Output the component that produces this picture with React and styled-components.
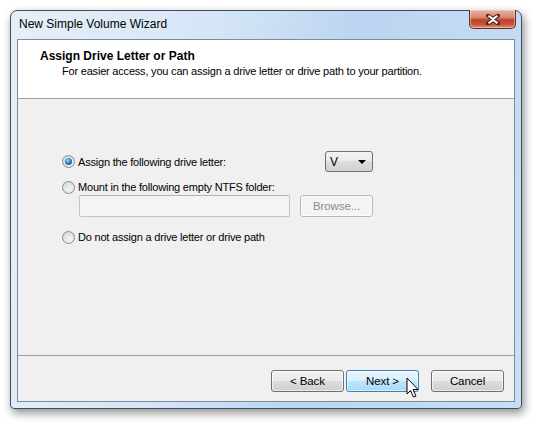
import React from "react";
import styled, { createGlobalStyle } from "styled-components";

const GlobalStyle = createGlobalStyle`
  html, body {
    margin: 0;
    padding: 0;
    background: #ffffff;
  }
  body {
    font-family: "Liberation Sans", Arial, sans-serif;
    font-size: 11px;
    color: #000;
  }
`;

const Page = styled.div`
  padding: 10px;
  width: 541px;
  height: 427px;
  box-sizing: border-box;
`;

const Window = styled.div`
  position: relative;
  width: 512px;
  height: 399px;
  box-sizing: border-box;
  border: 1px solid #3f4d5d;
  border-radius: 7px 7px 4px 4px;
  background: linear-gradient(100deg, #e6eff9 0%, #d6e6f7 35%, #bcd5f0 60%, #c8def5 100%);
  box-shadow: 2px 4px 10px rgba(0, 0, 0, 0.45);
  display: flex;
  flex-direction: column;
  padding: 0 6px 6px 6px;
`;

const TitleBar = styled.div`
  height: 28px;
  display: flex;
  justify-content: space-between;
  align-items: flex-start;
  margin: 0 -1px 0 -6px;
`;

const Caption = styled.div`
  padding: 6px 0 0 8px;
  font-size: 12px;
  line-height: 15px;
  color: #000;
`;

const CloseButton = styled.div`
  margin-top: -1px;
  width: 47px;
  height: 19px;
  box-sizing: border-box;
  border: 1px solid #6b2c22;
  border-top: none;
  border-radius: 0 0 5px 5px;
  background: linear-gradient(
    180deg,
    #e9b1a2 0%,
    #d98a74 40%,
    #c0432c 55%,
    #c9553b 80%,
    #e0937a 100%
  );
  box-shadow: inset 0 0 0 1px rgba(255, 220, 210, 0.5);
  display: flex;
  align-items: center;
  justify-content: center;
`;

const Client = styled.div`
  flex: 1;
  display: flex;
  flex-direction: column;
  border: 1px solid #7b8a9c;
  background: #f0f0f0;
`;

const Header = styled.div`
  height: 59px;
  background: #fff;
  border-bottom: 1px solid #a0a0a0;
  padding: 9px 0 0 22px;
  box-sizing: border-box;
`;

const HeaderTitle = styled.div`
  font-weight: bold;
  font-size: 12px;
  line-height: 15px;
`;

const HeaderText = styled.div`
  margin-left: 22px;
  line-height: 14px;
  letter-spacing: -0.2px;
`;

const Body = styled.div`
  flex: 1;
  padding: 52px 0 0 44px;
  border-bottom: 1px solid #a0a0a0;
`;

const Options = styled.div`
  width: 311px;
  display: flex;
  flex-direction: column;
`;

const Row = styled.div`
  display: flex;
  align-items: center;
  justify-content: space-between;
  height: ${(p) => p.$h || 16}px;
  margin-top: ${(p) => p.$mt || 0}px;
`;

const RadioLabel = styled.label`
  display: flex;
  align-items: center;
  gap: 3px;
  letter-spacing: -0.2px;
  line-height: 14px;
`;

const Radio = styled.span`
  width: 13px;
  height: 13px;
  box-sizing: border-box;
  border-radius: 50%;
  border: 1px solid #8a8c8e;
  background: radial-gradient(circle at 60% 65%, #f6f6f6 0%, #e4e4e4 50%, #cfcfcf 100%);
  display: flex;
  align-items: center;
  justify-content: center;

  &::after {
    content: "";
    display: ${(p) => (p.$checked ? "block" : "none")};
    width: 7px;
    height: 7px;
    border-radius: 50%;
    background: radial-gradient(circle at 40% 35%, #9fdcf8 0%, #2a85bf 45%, #0a3d66 100%);
  }
`;

const Select = styled.div`
  width: 48px;
  height: 21px;
  box-sizing: border-box;
  border: 1px solid #707070;
  border-radius: 3px;
  background: linear-gradient(180deg, #f3f3f3 0%, #ececec 45%, #dddddd 50%, #d0d0d0 100%);
  display: flex;
  align-items: center;
  justify-content: space-between;
  padding: 0 6px 0 4px;
  font-size: 12px;
`;

const Arrow = styled.span`
  width: 0;
  height: 0;
  border-left: 4px solid transparent;
  border-right: 4px solid transparent;
  border-top: 4px solid #000;
`;

const FolderRow = styled.div`
  display: flex;
  gap: 10px;
  height: 22px;
  padding-left: 17px;
`;

const TextBox = styled.div`
  flex: 1;
  box-sizing: border-box;
  border: 1px solid #c5c5c5;
  border-top-color: #b3b3b3;
  border-radius: 2px;
  background: #f4f4f4;
`;

const Button = styled.button`
  width: ${(p) => p.$w || 73}px;
  height: 22px;
  box-sizing: border-box;
  padding: 0;
  font-family: inherit;
  font-size: 11.5px;
  letter-spacing: -0.1px;
  border-radius: 3px;
  border: 1px solid ${(p) => (p.$disabled ? "#b5b8ba" : p.$hot ? "#3c7fb1" : "#707070")};
  color: ${(p) => (p.$disabled ? "#8b8b8b" : "#000")};
  background: ${(p) =>
    p.$disabled
      ? "#f4f4f4"
      : p.$hot
      ? "linear-gradient(180deg, #eaf6fd 0%, #d9f0fc 48%, #bee6fd 52%, #a7d9f5 100%)"
      : "linear-gradient(180deg, #f2f2f2 0%, #ebebeb 48%, #dddddd 52%, #cfcfcf 100%)"};
  box-shadow: inset 0 0 0 1px rgba(255, 255, 255, 0.6);
`;

const Footer = styled.div`
  height: 45px;
  display: flex;
  justify-content: flex-end;
  align-items: flex-start;
  padding: 14px 10px 0 0;
  box-sizing: border-box;
  gap: 2px;
`;

const CancelWrap = styled.div`
  margin-left: 10px;
`;

const Cursor = styled.svg`
  position: absolute;
  left: 395px;
  top: 366px;
`;

export default function App() {
  return (
    <Page>
      <GlobalStyle />
      <Window>
        <TitleBar>
          <Caption>New Simple Volume Wizard</Caption>
          <CloseButton>
            <svg width="14" height="11" viewBox="0 0 14 11">
              <path
                d="M2 1.5 L7 5 L12 1.5 M2 9.5 L7 6 L12 9.5"
                stroke="#4a2a24"
                strokeWidth="4"
                fill="none"
                strokeLinecap="square"
              />
              <path
                d="M2.5 1.8 L7 5 L11.5 1.8 M2.5 9.2 L7 6 L11.5 9.2"
                stroke="#fff"
                strokeWidth="2"
                fill="none"
              />
            </svg>
          </CloseButton>
        </TitleBar>
        <Client>
          <Header>
            <HeaderTitle>Assign Drive Letter or Path</HeaderTitle>
            <HeaderText>
              For easier access, you can assign a drive letter or drive path to your partition.
            </HeaderText>
          </Header>
          <Body>
            <Options>
              <Row $h={21}>
                <RadioLabel>
                  <Radio $checked />
                  Assign the following drive letter:
                </RadioLabel>
                <Select>
                  V
                  <Arrow />
                </Select>
              </Row>
              <Row $mt={7}>
                <RadioLabel>
                  <Radio />
                  Mount in the following empty NTFS folder:
                </RadioLabel>
              </Row>
              <FolderRow>
                <TextBox />
                <Button $disabled>Browse...</Button>
              </FolderRow>
              <Row $mt={12}>
                <RadioLabel>
                  <Radio />
                  Do not assign a drive letter or drive path
                </RadioLabel>
              </Row>
            </Options>
          </Body>
          <Footer>
            <Button>&lt; Back</Button>
            <Button $hot>Next &gt;</Button>
            <CancelWrap>
              <Button>Cancel</Button>
            </CancelWrap>
          </Footer>
        </Client>
        <Cursor width="14" height="22" viewBox="0 0 14 22">
          <path
            d="M1 1 L1 17 L4.5 13.5 L7.5 20 L10 19 L7 12.5 L12 12.5 Z"
            fill="#fff"
            stroke="#000"
            strokeWidth="1"
            strokeLinejoin="miter"
          />
        </Cursor>
      </Window>
    </Page>
  );
}
